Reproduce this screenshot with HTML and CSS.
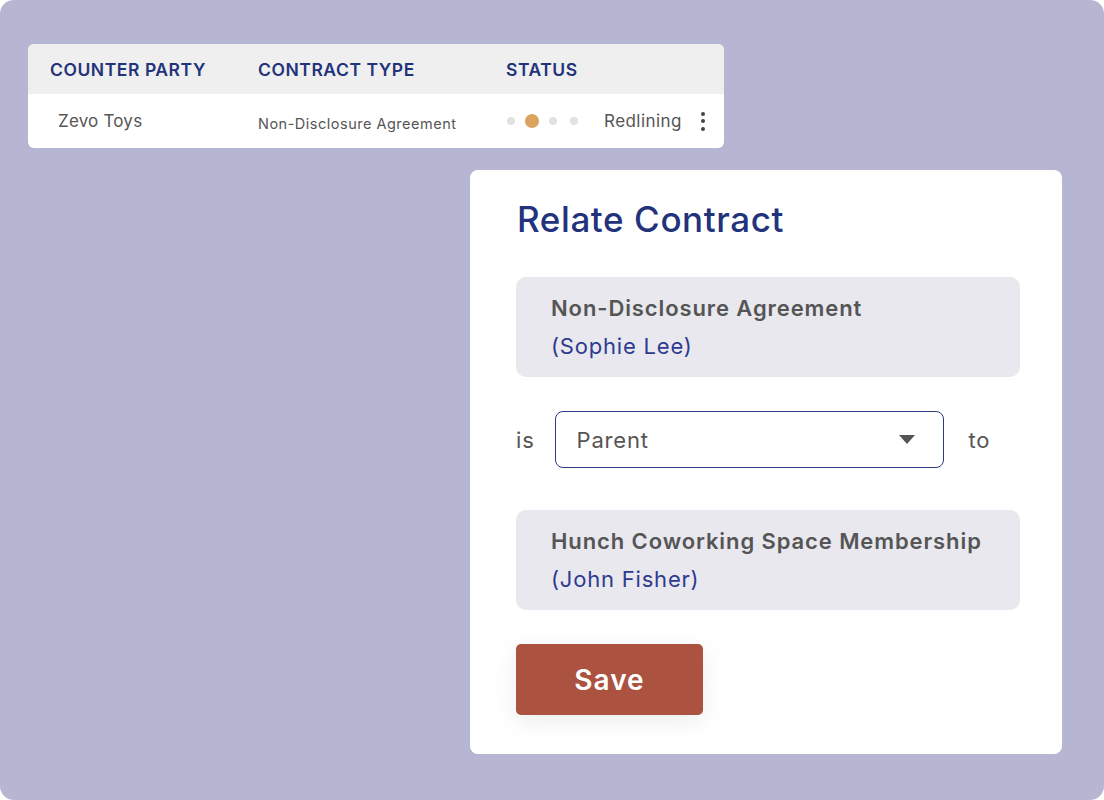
FILE: index.html
```html
<!DOCTYPE html>
<html lang="en">
<head>
  <meta charset="UTF-8">
  <meta name="viewport" content="width=device-width, initial-scale=1.0">
  <title>Relate Contract</title>
  <link rel="stylesheet" href="styles.css">
</head>
<body>
  <div class="frame">
    <div class="contract-table">
      <div class="table-head">
        <div>COUNTER PARTY</div>
        <div>CONTRACT TYPE</div>
        <div>STATUS</div>
      </div>
      <div class="table-row">
        <div class="party">Zevo Toys</div>
        <div class="type">Non-Disclosure Agreement</div>
        <div class="status">
          <div class="steps">
            <span class="dot"></span>
            <span class="dot active"></span>
            <span class="dot"></span>
            <span class="dot"></span>
          </div>
          <span class="status-text">Redlining</span>
          <span class="kebab"><i></i><i></i><i></i></span>
        </div>
      </div>
    </div>

    <div class="modal">
      <h1>Relate Contract</h1>

      <div class="contract-card">
        <div class="card-title">Non-Disclosure Agreement</div>
        <div class="card-owner">(Sophie Lee)</div>
      </div>

      <div class="relation">
        <span>is</span>
        <div class="select">
          <span>Parent</span>
          <svg width="16" height="10" viewBox="0 0 16 10"><path d="M0 0h16L8 9z" fill="#555"/></svg>
        </div>
        <span>to</span>
      </div>

      <div class="contract-card">
        <div class="card-title">Hunch Coworking Space Membership</div>
        <div class="card-owner">(John Fisher)</div>
      </div>

      <button class="save-btn">Save</button>
    </div>
  </div>
</body>
</html>
```

FILE: styles.css
```css
* {
  margin: 0;
  padding: 0;
  box-sizing: border-box;
  font-family: Inter, "Open Sans", Arial, sans-serif;
}

body {
  background-color: #fff;
}

.frame {
  width: 1104px;
  height: 800px;
  background-color: #b6b6d2;
  border-radius: 14px;
  padding: 44px 28px 0;
  overflow: hidden;
}

/* table */
.contract-table {
  width: 696px;
  background-color: #fff;
  border-radius: 6px;
  overflow: hidden;
}

.table-head,
.table-row {
  display: grid;
  grid-template-columns: 208px 248px 1fr;
  align-items: center;
  padding-left: 22px;
}

.table-head {
  height: 50px;
  background-color: #efefef;
  color: #22337c;
  font-size: 17.5px;
  font-weight: 600;
  letter-spacing: 0.55px;
}

.table-row {
  height: 54px;
  color: #555;
}

.party {
  font-size: 17px;
  padding-left: 8px;
  letter-spacing: 0.2px;
}

.type {
  font-size: 14.5px;
  padding-top: 5px;
  letter-spacing: 0.5px;
}

.status {
  display: flex;
  align-items: center;
  font-size: 17px;
}

.steps {
  display: flex;
  align-items: center;
  gap: 13px;
  margin-left: 1px;
}

.dot {
  width: 8px;
  height: 8px;
  border-radius: 50%;
  background-color: #e2e2e2;
}

.dot.active {
  width: 14px;
  height: 14px;
  background-color: #dba35e;
  margin: 0 -3px;
}

.status-text {
  margin-left: 26px;
  letter-spacing: 0.45px;
}

.kebab {
  display: flex;
  flex-direction: column;
  gap: 3.5px;
  margin-left: 19px;
}

.kebab i {
  width: 4px;
  height: 4px;
  border-radius: 50%;
  background-color: #444;
}

/* modal */
.modal {
  width: 592px;
  height: 584px;
  margin: 22px 0 0 442px;
  background-color: #fff;
  border-radius: 8px;
  padding: 26px 42px 0 46px;
}

.modal h1 {
  font-size: 35px;
  font-weight: 500;
  color: #22337c;
  line-height: 46px;
  letter-spacing: 0.6px;
  margin-left: 1px;
  margin-bottom: 35px;
}

.contract-card {
  height: 100px;
  background-color: #e8e8ee;
  border-radius: 10px;
  padding: 15px 35px 0;
}

.card-title {
  font-size: 22px;
  font-weight: 600;
  color: #555;
  line-height: 32px;
  letter-spacing: 0.9px;
}

.card-owner {
  font-size: 22px;
  color: #2e3b8e;
  line-height: 32px;
  letter-spacing: 0.8px;
  margin-top: 6px;
}

.relation {
  display: flex;
  align-items: center;
  height: 57px;
  margin: 34px 0 42px;
  font-size: 22px;
  color: #555;
  letter-spacing: 0.8px;
}

.select {
  display: flex;
  align-items: center;
  justify-content: space-between;
  width: 389px;
  height: 57px;
  margin: 0 25px 0 20px;
  border: 1.5px solid #2d3a80;
  border-radius: 8px;
  padding: 0 28px 0 21px;
}

.save-btn {
  display: block;
  margin-top: 34px;
  width: 187px;
  height: 71px;
  border: none;
  border-radius: 5px;
  background-color: #ab5340;
  color: #fff;
  font-size: 28px;
  font-weight: 600;
  letter-spacing: 1px;
  box-shadow: 0 6px 24px rgba(0, 0, 0, 0.08);
}
```
